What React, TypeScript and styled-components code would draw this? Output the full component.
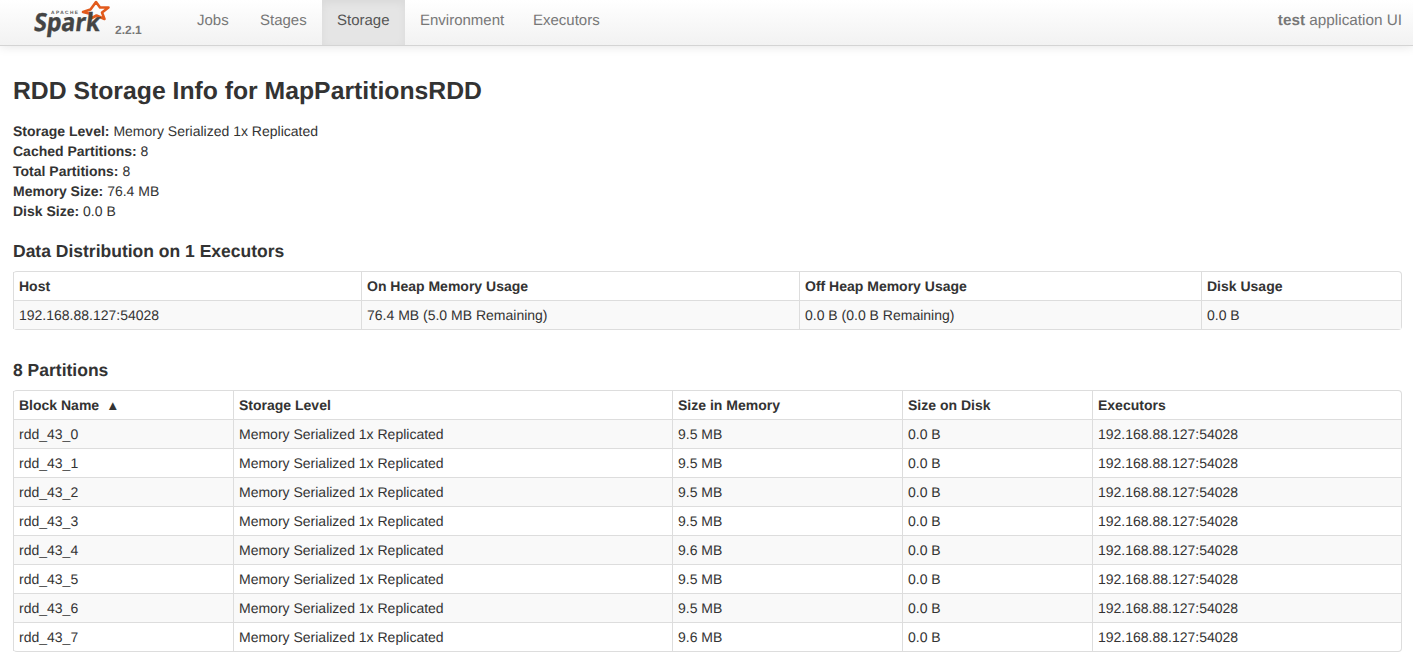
import { createGlobalStyle, styled } from "styled-components";

const GlobalStyle = createGlobalStyle`
  html, body {
    margin: 0;
    padding: 0;
    background: #fff;
    color: #333;
    font-family: "Liberation Sans", Arial, sans-serif;
    font-size: 14px;
    line-height: 20px;
    text-rendering: geometricPrecision;
  }
`;

const Navbar = styled.div`
  display: flex;
  align-items: stretch;
  height: 45px;
  padding-right: 11px;
  background: linear-gradient(to bottom, #ffffff, #f2f2f2);
  border-bottom: 1px solid #d4d4d4;
  box-shadow: 0 1px 10px rgba(0, 0, 0, 0.1);
`;

const Brand = styled.div`
  display: flex;
  width: 182px;
  padding-left: 33px;
  box-sizing: border-box;
`;

const Version = styled.span`
  margin: 20px 0 0 4px;
  font-size: 12px;
  font-weight: bold;
  color: #777;
`;

const NavLink = styled.a<{ $active?: boolean; $width: number }>`
  box-sizing: border-box;
  width: ${(props) => props.$width}px;
  padding: 11px 0 0 15px;
  font-size: 15px;
  color: ${(props) => (props.$active ? "#555" : "#777")};
  background: ${(props) => (props.$active ? "#e5e5e5" : "transparent")};
  box-shadow: ${(props) =>
    props.$active ? "inset 0 3px 8px rgba(0, 0, 0, 0.05)" : "none"};
`;

const AppName = styled.div`
  margin-left: auto;
  padding-top: 11px;
  font-size: 15.3px;
  color: #777;
`;

const Content = styled.div`
  padding: 26px 11px 0 13px;
`;

const Title = styled.h3`
  margin: 0 0 9px;
  font-size: 24.75px;
  line-height: 40px;
  font-weight: bold;
`;

const Details = styled.ul`
  margin: 0 0 20px;
  padding: 0;
  list-style: none;
`;

const SectionTitle = styled.h4`
  margin: 0 0 10px;
  font-size: 17.5px;
  line-height: 20px;
  font-weight: bold;
`;

const Table = styled.table`
  width: 100%;
  margin-bottom: 30px;
  table-layout: fixed;
  border-collapse: separate;
  border-spacing: 0;
  border: 1px solid #ddd;
  border-left: 0;
  border-radius: 4px;
`;

const Head = styled.th`
  padding: 4px 5px;
  text-align: left;
  font-weight: bold;
  border-left: 1px solid #ddd;
`;

const SortArrow = styled.span`
  margin-left: 10px;
  font-size: 14px;
  line-height: 1;
`;

const Cell = styled.td`
  padding: 4px 5px;
  border-top: 1px solid #ddd;
  border-left: 1px solid #ddd;
`;

const Row = styled.tr<{ $striped: boolean }>`
  background: ${(props) => (props.$striped ? "#f9f9f9" : "transparent")};
`;

const SparkLogo = () => (
  <svg width="78" height="45" viewBox="0 0 78 45">
    <path
      d="M50 12 L57.5 9.5 L63 2 L67 7.5 L75.5 7.5 L69 12.5 L71.5 19 L63.5 15.5 L58 18.5 L58 14 Z"
      fill="none"
      stroke="#e25a1c"
      strokeWidth="2.6"
      strokeLinejoin="round"
    />
    <text
      x="18"
      y="14"
      fontFamily="'Liberation Sans', sans-serif"
      fontSize="4.8"
      fontWeight="bold"
      textLength="27"
      fill="#555"
    >
      APACHE
    </text>
    <text
      x="0"
      y="31"
      transform="skewX(-7) translate(4 0)"
      fontFamily="'Open Sans', sans-serif"
      fontSize="25"
      fontWeight="700"
      textLength="66"
      lengthAdjust="spacingAndGlyphs"
      fill="#444"
      stroke="#444"
      strokeWidth="0.4"
    >
      Spark
    </text>
  </svg>
);

const details = [
  ["Storage Level:", "Memory Serialized 1x Replicated"],
  ["Cached Partitions:", "8"],
  ["Total Partitions:", "8"],
  ["Memory Size:", "76.4 MB"],
  ["Disk Size:", "0.0 B"],
];

const blocks = ["9.5", "9.5", "9.5", "9.5", "9.6", "9.5", "9.5", "9.6"];

export default function App() {
  return (
    <>
      <GlobalStyle />
      <Navbar>
        <Brand>
          <SparkLogo />
          <Version>2.2.1</Version>
        </Brand>
        <NavLink $width={63}>Jobs</NavLink>
        <NavLink $width={77}>Stages</NavLink>
        <NavLink $width={83} $active>
          Storage
        </NavLink>
        <NavLink $width={113}>Environment</NavLink>
        <NavLink $width={98}>Executors</NavLink>
        <AppName>
          <strong>test</strong> application UI
        </AppName>
      </Navbar>
      <Content>
        <Title>RDD Storage Info for MapPartitionsRDD</Title>
        <Details>
          {details.map(([label, value]) => (
            <li key={label}>
              <strong>{label}</strong> {value}
            </li>
          ))}
        </Details>
        <SectionTitle>Data Distribution on 1 Executors</SectionTitle>
        <Table>
          <colgroup>
            <col width="348" />
            <col width="438" />
            <col width="402" />
            <col width="200" />
          </colgroup>
          <thead>
            <tr>
              <Head>Host</Head>
              <Head>On Heap Memory Usage</Head>
              <Head>Off Heap Memory Usage</Head>
              <Head>Disk Usage</Head>
            </tr>
          </thead>
          <tbody>
            <Row $striped>
              <Cell>192.168.88.127:54028</Cell>
              <Cell>76.4 MB (5.0 MB Remaining)</Cell>
              <Cell>0.0 B (0.0 B Remaining)</Cell>
              <Cell>0.0 B</Cell>
            </Row>
          </tbody>
        </Table>
        <SectionTitle>8 Partitions</SectionTitle>
        <Table>
          <colgroup>
            <col width="220" />
            <col width="439" />
            <col width="230" />
            <col width="190" />
            <col width="309" />
          </colgroup>
          <thead>
            <tr>
              <Head>
                Block Name<SortArrow>▴</SortArrow>
              </Head>
              <Head>Storage Level</Head>
              <Head>Size in Memory</Head>
              <Head>Size on Disk</Head>
              <Head>Executors</Head>
            </tr>
          </thead>
          <tbody>
            {blocks.map((size, index) => (
              <Row key={index} $striped={index % 2 === 0}>
                <Cell>rdd_43_{index}</Cell>
                <Cell>Memory Serialized 1x Replicated</Cell>
                <Cell>{size} MB</Cell>
                <Cell>0.0 B</Cell>
                <Cell>192.168.88.127:54028</Cell>
              </Row>
            ))}
          </tbody>
        </Table>
      </Content>
    </>
  );
}
